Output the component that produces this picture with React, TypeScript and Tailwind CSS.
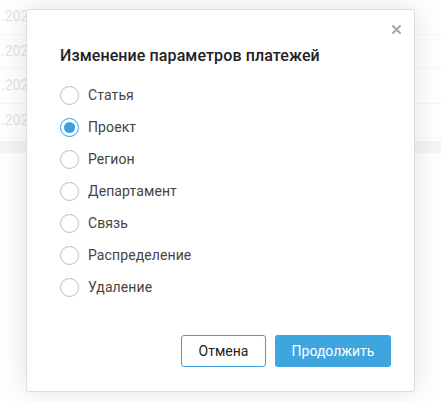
import React, { useState } from "react";

const options = ["Статья", "Проект", "Регион", "Департамент", "Связь", "Распределение", "Удаление"];

export default function App() {
  const [sel, setSel] = useState(1);
  return (
    <div className="relative w-[441px] h-[402px] overflow-hidden bg-white" style={{ fontFamily: "Roboto, 'Noto Sans', sans-serif" }}>
      {/* background table */}
      <div className="flex flex-col">
        {[0, 1, 2, 3].map((i) => (
          <div key={i} className="h-[34.5px] border-b border-[#f2f2f2] flex items-center text-[14px] text-[#d0d0d0]">
            <span className="pl-[1px]">.2024</span>
          </div>
        ))}
        <div className="h-[12px] bg-[#efefef] mt-[3px]" />
      </div>
      <div className="absolute inset-0 bg-white/40" />
      {/* modal */}
      <div className="absolute left-[26px] top-[9px] w-[389px] h-[383px] bg-white border border-[#dcdcdc] rounded-[3px] shadow-[0_0_30px_rgba(0,0,0,0.12)]">
        <button className="absolute right-[13px] top-[14px] w-[10px] h-[10px] flex items-center justify-center">
          <svg width="9" height="9" viewBox="0 0 9 9">
            <path d="M1 1L8 8M8 1L1 8" stroke="#a8a8a8" strokeWidth="2" strokeLinecap="round" />
          </svg>
        </button>
        <div className="pl-[33px] pt-[34px]">
          <h2 className="text-[16px] font-medium text-[#222] leading-[24px] tracking-[0.1px]">Изменение параметров платежей</h2>
          <div className="flex flex-col mt-[18px] gap-[13px]">
            {options.map((o, i) => (
              <label key={o} className="flex items-center gap-[9px] h-[19px] cursor-pointer" onClick={() => setSel(i)}>
                <span
                  className={
                    "w-[19px] h-[19px] rounded-full border flex items-center justify-center " +
                    (sel === i ? "border-[#3aa0e0]" : "border-[#bdbdbd]")
                  }
                >
                  {sel === i && <span className="w-[11px] h-[11px] rounded-full bg-[#3aa0e0]" />}
                </span>
                <span className="text-[14px] text-[#444] tracking-[0.1px]">{o}</span>
              </label>
            ))}
          </div>
        </div>
        <div className="absolute right-[23px] bottom-[24px] flex gap-[9px]">
          <button className="w-[85px] h-[32px] rounded-[3px] border border-[#3aa0e0] bg-white text-[14px] text-[#222]">Отмена</button>
          <button className="w-[116px] h-[32px] rounded-[3px] bg-[#3fa5df] text-[14px] text-white">Продолжить</button>
        </div>
      </div>
    </div>
  );
}
